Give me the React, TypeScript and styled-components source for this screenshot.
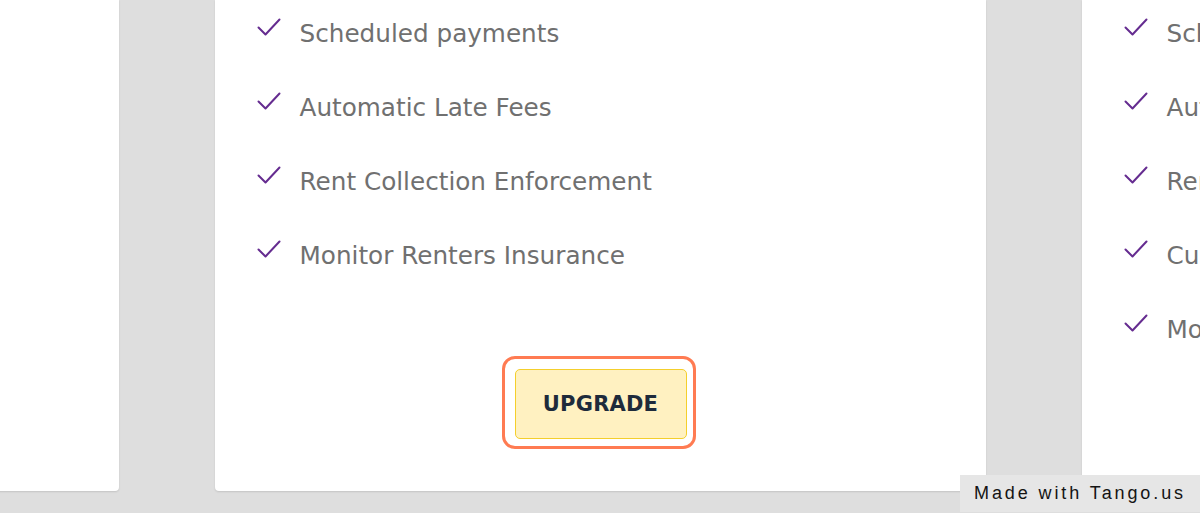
import * as React from 'react';
import styled, { createGlobalStyle } from 'styled-components';

const GlobalStyle = createGlobalStyle`
    html, body {
        margin: 0;
        padding: 0;
        background: #dedede;
        overflow: hidden;
    }
`

type Plan = {
    features: string[],
    upgrade: boolean,
}

const plans: Plan[] = [
    { features: [], upgrade: false },
    {
        features: [
            'Scheduled payments',
            'Automatic Late Fees',
            'Rent Collection Enforcement',
            'Monitor Renters Insurance',
        ],
        upgrade: true,
    },
    {
        features: [
            'Scheduled payments',
            'Automatic Late Fees',
            'Rent Collection Enforcement',
            'Custom Lease Templates',
            'Monitor Renters Insurance',
        ],
        upgrade: false,
    },
]

const Check = () => (
    <CheckIcon viewBox="0 0 24 18" width="24" height="18">
        <path d="M1.5 9.5 L8.5 16.5 L22.5 1.5" fill="none" stroke="#652c90" strokeWidth="2" strokeLinecap="round" strokeLinejoin="round" />
    </CheckIcon>
)

const App: React.FC = () => {
    return (
        <Page>
            <GlobalStyle />
            <CardRow>
                {
                    plans.map((plan, index) => (
                        <Card key={index}>
                            <FeatureList>
                                {
                                    plan.features.map(item => (
                                        <Feature key={item}>
                                            <Check />
                                            <FeatureText>{item}</FeatureText>
                                        </Feature>
                                    ))
                                }
                            </FeatureList>
                            {
                                plan.upgrade &&
                                <ButtonArea>
                                    <Highlight>
                                        <UpgradeButton>UPGRADE</UpgradeButton>
                                    </Highlight>
                                </ButtonArea>
                            }
                        </Card>
                    ))
                }
            </CardRow>
            <TangoBadge>Made with Tango.us</TangoBadge>
        </Page>
    )
}

export default App;

const Page = styled.div`
    position: relative;
    width: 1200px;
    height: 513px;
    overflow: hidden;
    background: #dedede;
`

const CardRow = styled.div`
    display: flex;
    flex-direction: row;
    justify-content: center;
    gap: 96px;
    height: 491px;
`

const Card = styled.div`
    flex: 0 0 771px;
    height: 491px;
    background: #ffffff;
    border-radius: 0 0 4px 4px;
    box-shadow: 0 1px 2px rgba(0, 0, 0, 0.12);
    display: flex;
    flex-direction: column;
    box-sizing: border-box;
    padding: 19px 0 0 41px;
`

const FeatureList = styled.ul`
    list-style: none;
    margin: 0;
    padding: 0;
    display: flex;
    flex-direction: column;
    gap: 44px;
`

const Feature = styled.li`
    display: flex;
    flex-direction: row;
    align-items: flex-start;
    height: 30px;
`

const CheckIcon = styled.svg`
    flex: 0 0 auto;
    margin: -1px 19px 0 1px;
`

const FeatureText = styled.span`
    font-family: "DejaVu Sans", sans-serif;
    font-size: 24.7px;
    line-height: 30px;
    color: #707070;
    white-space: nowrap;
`

const ButtonArea = styled.div`
    margin-top: 85px;
    margin-left: -41px;
    display: flex;
    justify-content: center;
    padding-right: 3px;
`

const Highlight = styled.div`
    border: 3px solid #ff7b52;
    border-radius: 13px;
    padding: 10px 6px 7px 10px;
`

const UpgradeButton = styled.button`
    width: 172px;
    height: 70px;
    background: #fff1c1;
    border: 1px solid #f4cf2c;
    border-radius: 5px;
    font-family: "DejaVu Sans", sans-serif;
    font-weight: bold;
    font-size: 21px;
    letter-spacing: 0.2px;
    color: #1e2b3b;
    cursor: pointer;
`

const TangoBadge = styled.div`
    position: absolute;
    right: 0;
    bottom: 1px;
    width: 240px;
    height: 37px;
    background: #e6e6e6;
    display: flex;
    align-items: center;
    justify-content: center;
    font-family: "Liberation Sans", sans-serif;
    font-size: 18px;
    letter-spacing: 2.9px;
    color: #141414;
`
